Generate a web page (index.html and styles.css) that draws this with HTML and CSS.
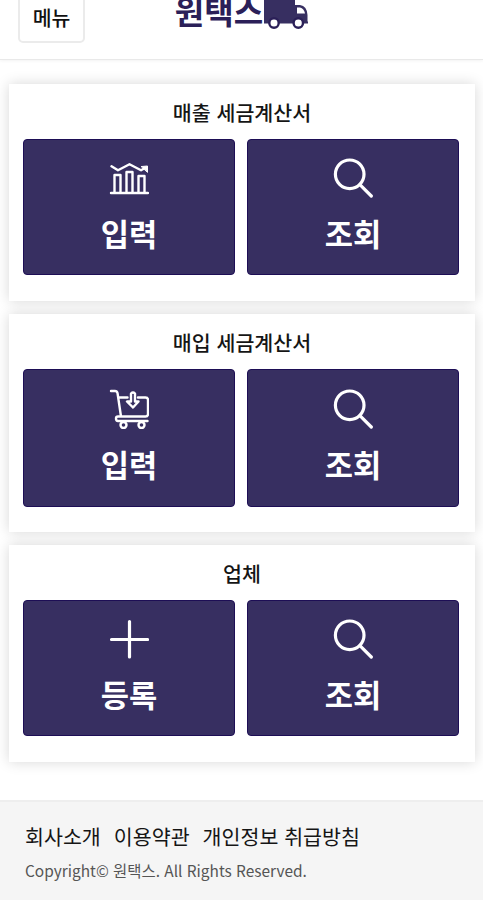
FILE: index.html
```html
<!DOCTYPE html>
<html lang="ko">
<head>
<meta charset="utf-8">
<meta name="viewport" content="width=device-width, initial-scale=1">
<title>원택스</title>
<link rel="stylesheet" href="styles.css">
</head>
<body>
<svg class="sprite" aria-hidden="true">
  <symbol id="search" viewBox="0 0 40 40">
    <circle cx="16.700" cy="16.300" r="14.300"/>
    <path d="M26.900 26.700 38.300 38"/>
  </symbol>
</svg>
<header class="header">
  <button class="menu" type="button">메뉴</button>
  <div class="logo">
    <span class="logo-text">원택스</span>
    <svg class="truck" viewBox="0 0 45 36" aria-hidden="true">
      <path class="truck-body" d="M1 2Q1 0 3 0H30Q32 0 32 2V12H37Q44 13 44.500 22V28.500H45V30.500H1Z"/>
      <path class="truck-window" d="M34 14.500H37Q41 15.500 42 20.500H34Z"/>
      <circle class="wheel" cx="11" cy="30" r="4.700"/>
      <circle class="wheel" cx="35.300" cy="30" r="4.700"/>
    </svg>
  </div>
</header>
<main class="main">
  <section class="card">
    <h2 class="title">매출 세금계산서</h2>
    <div class="actions">
      <a class="action">
        <svg class="icon" viewBox="0 0 40 40" aria-hidden="true">
          <path class="fine" d="M2 35H39M5.500 34.500V17H11.500V34.500M17.500 34.500V14H23.500V34.500M29.500 34.500V18H35.500V34.500M2.500 8.300 9 12.300 20.500 6.300 32 12.300 36 10"/>
          <path class="solid" d="M32.500 8.500 38.500 8V14Z"/>
        </svg>
        <span class="label">입력</span>
      </a>
      <a class="action">
        <svg class="icon" aria-hidden="true"><use href="#search"/></svg>
        <span class="label">조회</span>
      </a>
    </div>
  </section>
  <section class="card tall">
    <h2 class="title">매입 세금계산서</h2>
    <div class="actions">
      <a class="action">
        <svg class="icon" viewBox="0 0 40 40" aria-hidden="true">
          <path class="fine" d="M2 2H6Q8 2 8.500 4L12 27.500M9.500 8.500H18.500M29 8.500H36.500Q39 8.500 39 11V25Q39 27.500 36.500 27.500H9Q7 27.500 7 29.500Q7 32 9 32H38.500M22 4.500Q24 2.500 26 4.500V12.500H29.500L24 18.500 18 12.500H22Z"/>
          <circle class="fine" cx="14.500" cy="36" r="3"/>
          <circle class="fine" cx="32.500" cy="36" r="3"/>
        </svg>
        <span class="label">입력</span>
      </a>
      <a class="action">
        <svg class="icon" aria-hidden="true"><use href="#search"/></svg>
        <span class="label">조회</span>
      </a>
    </div>
  </section>
  <section class="card">
    <h2 class="title">업체</h2>
    <div class="actions">
      <a class="action">
        <svg class="icon" viewBox="0 0 40 40" aria-hidden="true"><path d="M20.500 2.500V38M2.500 20.500H38.500"/></svg>
        <span class="label">등록</span>
      </a>
      <a class="action">
        <svg class="icon" aria-hidden="true"><use href="#search"/></svg>
        <span class="label">조회</span>
      </a>
    </div>
  </section>
</main>
<footer class="footer">
  <nav class="links"><a>회사소개</a><a>이용약관</a><a>개인정보 취급방침</a></nav>
  <p class="copyright">Copyright© 원택스. All Rights Reserved.</p>
</footer>
</body>
</html>
```
FILE: styles.css
```css
* { box-sizing: border-box; }
body {
  margin: 0;
  height: 900px;
  overflow: hidden;
  display: flex;
  flex-direction: column;
  background: #fff;
  color: #151515;
  font-family: "Noto Sans CJK KR", sans-serif;
}
.sprite { display: none; }
.header {
  display: grid;
  grid-template-columns: 1fr auto 1fr;
  align-content: end;
  align-items: end;
  height: 60px;
  flex: none;
  padding: 0 18px 16px;
  border-bottom: 1px solid #e9e9e9;
  box-shadow: 0 1px 3px #0000000d;
}
.menu {
  width: 67px;
  height: 52px;
  padding: 0;
  background: #fff;
  border: 2px solid #ebebeb;
  border-radius: 5px;
  color: #111;
  font: 500 20.5px/46px "Noto Sans CJK KR", sans-serif;
}
.logo {
  display: flex;
  align-items: flex-end;
  height: 43px;
  padding-bottom: 14px;
  color: #2b2058;
}
.logo-text { font-size: 32px; font-weight: 700; line-height: 36px; margin-bottom: 1px; }
.truck { width: 45px; height: 36px; flex: none; }
.truck-body { fill: #372f61; }
.truck-window { fill: #fff; }
.wheel { fill: #fff; stroke: #2b2058; stroke-width: 2.4; }
.main {
  flex: none;
  display: flex;
  flex-direction: column;
  gap: 13px;
  height: 740px;
  padding: 24px 8px 0 9px;
}
.card {
  height: 217px;
  padding: 13px 16px 0 14px;
  background: #fff;
  box-shadow: 0 0 13px #00000028;
}
.card.tall { height: 218px; }
.title {
  margin: 0 -2px 12px 0;
  font-size: 20.6px;
  font-weight: 500;
  line-height: 30px;
  text-align: center;
}
.actions { display: grid; grid-template-columns: 1fr 1fr; gap: 12px; }
.action {
  display: flex;
  flex-direction: column;
  align-items: center;
  height: 136px;
  padding-top: 18px;
  background: #372f61;
  border: 1px solid #1d0e55;
  border-radius: 4px;
  color: #fff;
}
.tall .action { height: 138px; padding-top: 19px; }
.icon {
  width: 40px;
  height: 40px;
  fill: none;
  stroke: #fff;
  stroke-width: 3.2;
  stroke-linecap: round;
  stroke-linejoin: round;
}
.fine { stroke-width: 2.4; }
.solid { fill: #fff; stroke-width: 1; }
.label { margin-top: 12px; font-size: 30.7px; font-weight: 700; line-height: 45px; }
.footer {
  flex: 1;
  padding: 19px 25px 0;
  background: #f5f5f5;
  border-top: 2px solid #eee;
}
.links { display: flex; gap: 13px; font-size: 20.6px; line-height: 30px; }
.copyright { margin: 7px 0 0; color: #555; font-size: 15.45px; line-height: 24px; }
```
